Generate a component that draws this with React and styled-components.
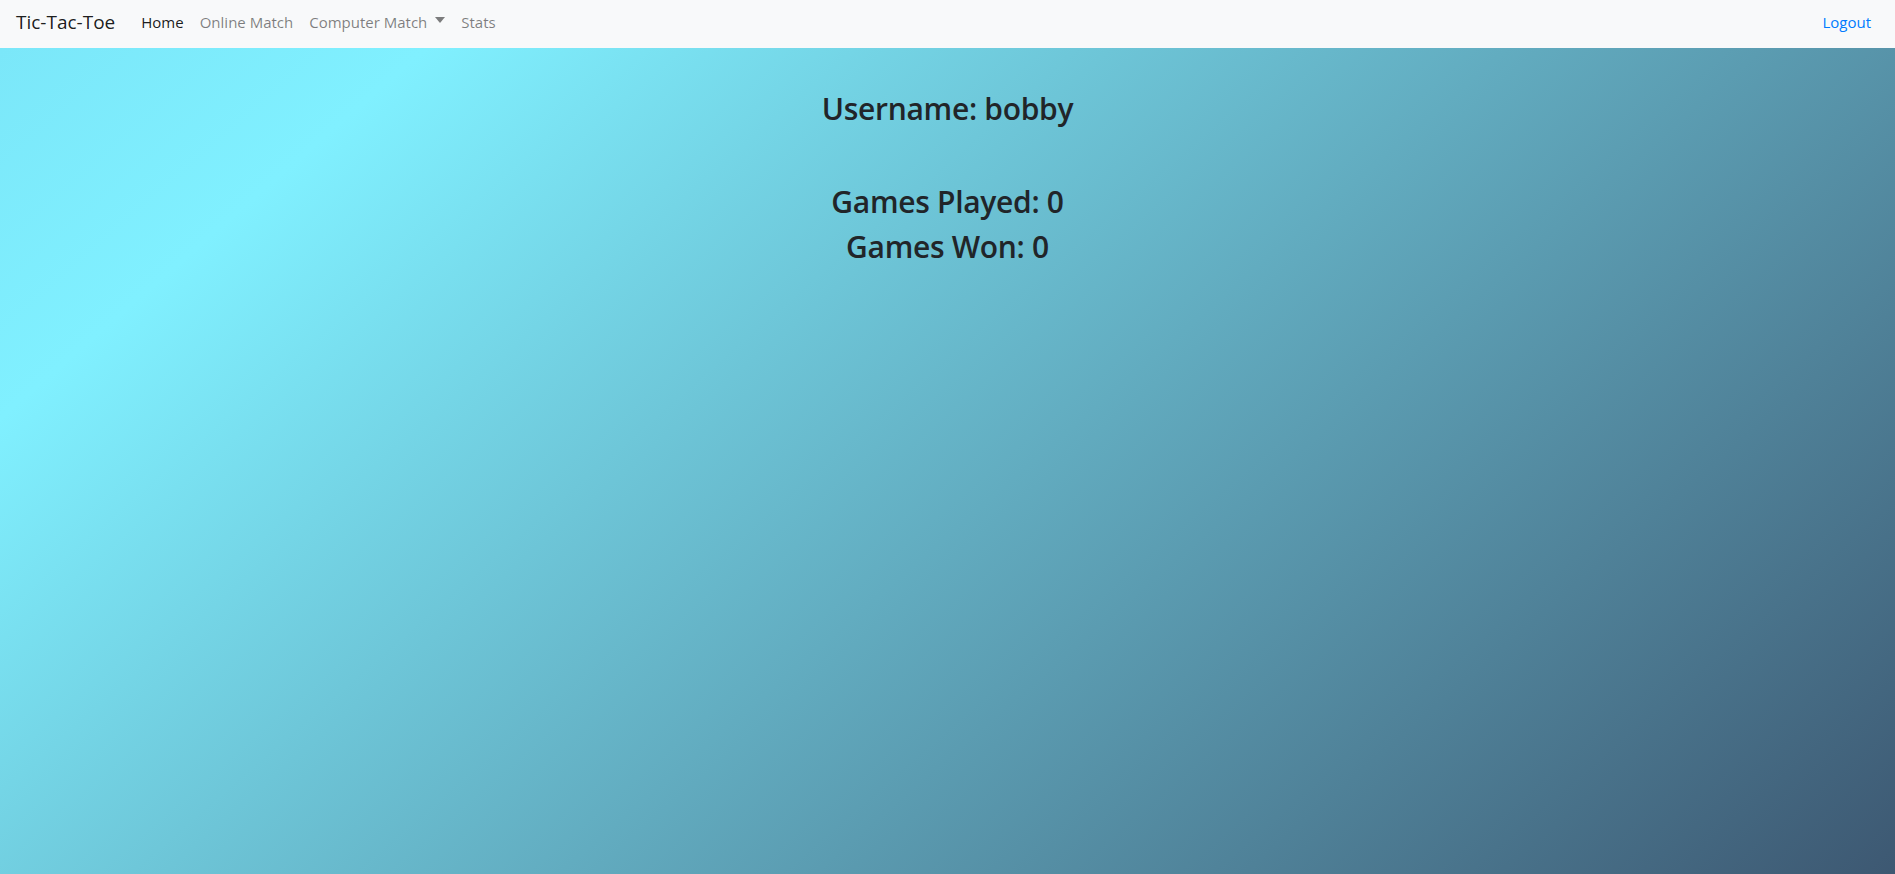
import React from "react";
import styled, { createGlobalStyle } from "styled-components";

const GlobalStyle = createGlobalStyle`
  * { box-sizing: border-box; }
  html, body { margin: 0; padding: 0; height: 100%; }
  body {
    font-family: "Segoe UI", "Open Sans", "Noto Sans", sans-serif;
    font-size: 16px;
    line-height: 1.5;
    color: #212529;
  }
  #root { min-height: 100%; }
`;

const Page = styled.div`
  display: flex;
  flex-direction: column;
  min-height: 100vh;
`;

const NavBar = styled.nav`
  display: flex;
  align-items: center;
  height: 48px;
  padding: 0 16px 5px;
  background: #f8f9fa;
  flex-shrink: 0;
`;

const Brand = styled.a`
  font-size: 19px;
  line-height: 30px;
  color: rgba(0, 0, 0, 0.9);
  margin-right: 18px;
  text-decoration: none;
  white-space: nowrap;
`;

const NavList = styled.ul`
  display: flex;
  align-items: center;
  list-style: none;
  margin: 0;
  padding: 0;
  flex: 1;
`;

const NavRight = styled.ul`
  display: flex;
  list-style: none;
  margin: 0;
  padding: 0;
`;

const NavLink = styled.a`
  display: block;
  padding: 8px;
  font-size: 15px;
  line-height: 24px;
  text-decoration: none;
  white-space: nowrap;
  color: ${(p) =>
    p.$variant === "active"
      ? "rgba(0,0,0,0.9)"
      : p.$variant === "primary"
      ? "#007bff"
      : "rgba(0,0,0,0.5)"};
`;

const Caret = styled.span`
  display: inline-block;
  margin-left: 8px;
  vertical-align: 0.3em;
  border-top: 6px solid;
  border-right: 5px solid transparent;
  border-left: 5px solid transparent;
  border-bottom: 0;
`;

const Main = styled.main`
  flex: 1;
  display: flex;
  flex-direction: column;
  align-items: center;
  padding-top: 42px;
  background: linear-gradient(139deg, #7be7f9 0%, #80f0ff 15%, #3d5872 100%);
`;

const Heading = styled.h2`
  margin: 0 0 ${(p) => (p.$gap ? "55px" : "6px")};
  font-size: 30px;
  font-weight: 600;
  letter-spacing: -0.3px;
  line-height: 38.4px;
  color: #212529;
  text-align: center;
`;

export default function App() {
  return (
    <Page>
      <GlobalStyle />
      <NavBar>
        <Brand href="#">Tic-Tac-Toe</Brand>
        <NavList>
          <li><NavLink $variant="active" href="#">Home</NavLink></li>
          <li><NavLink href="#">Online Match</NavLink></li>
          <li><NavLink href="#">Computer Match<Caret /></NavLink></li>
          <li><NavLink href="#">Stats</NavLink></li>
        </NavList>
        <NavRight>
          <li><NavLink $variant="primary" href="#">Logout</NavLink></li>
        </NavRight>
      </NavBar>
      <Main>
        <Heading $gap>Username: bobby</Heading>
        <Heading>Games Played: 0</Heading>
        <Heading>Games Won: 0</Heading>
      </Main>
    </Page>
  );
}
